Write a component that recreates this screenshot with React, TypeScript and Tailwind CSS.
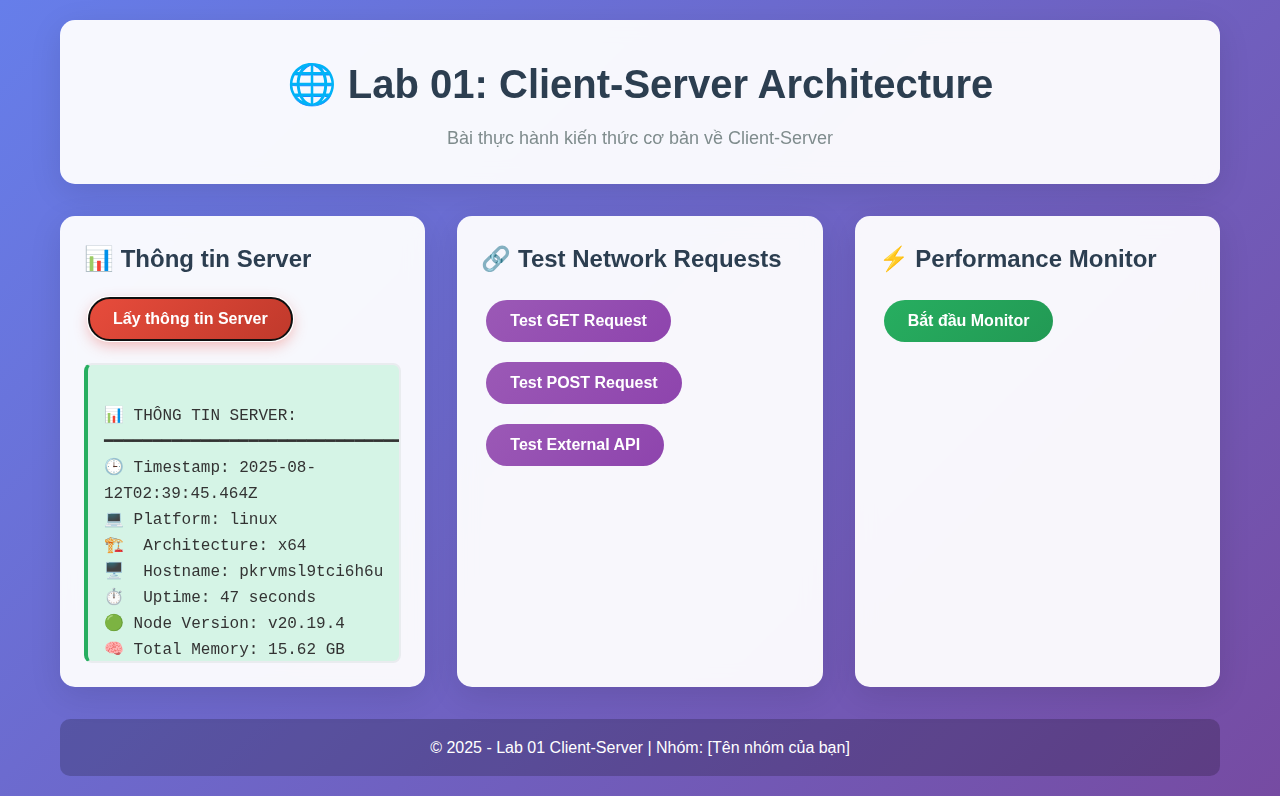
import type { ReactNode } from 'react';

const serverInfo = [
  '📊 THÔNG TIN SERVER:',
  '━'.repeat(40),
  '🕒 Timestamp: 2025-08-12T02:39:45.464Z',
  '💻 Platform: linux',
  '🏗️  Architecture: x64',
  '🖥️  Hostname: pkrvmsl9tci6h6u',
  '⏱️  Uptime: 47 seconds',
  '🟢 Node Version: v20.19.4',
  '🧠 Total Memory: 15.62 GB',
].join('\n');

const tones = {
  danger:
    'bg-[linear-gradient(135deg,#e74c3c,#c0392b)] -translate-y-0.5 shadow-[0_5px_15px_rgba(231,76,60,0.4)] [outline:auto_1px_-webkit-focus-ring-color]',
  purple: 'bg-[linear-gradient(135deg,#9b59b6,#8e44ad)]',
  green: 'bg-[linear-gradient(135deg,#27ae60,#229954)]',
};

function PillButton({ tone, children }: { tone: keyof typeof tones; children: ReactNode }) {
  return (
    <button
      type="button"
      className={`cursor-pointer rounded-[25px] px-6 py-3 text-base leading-[18px] font-semibold text-white ${tones[tone]}`}
    >
      {children}
    </button>
  );
}

function Card({ title, actions, children }: { title: string; actions: ReactNode; children?: ReactNode }) {
  return (
    <section className="min-w-0 rounded-[15px] bg-white/95 p-6 shadow-[0_8px_32px_rgba(0,0,0,0.1)] backdrop-blur-[10px]">
      <h2 className="mb-4 text-2xl leading-[38px] font-bold text-[#2c3e50]">{title}</h2>
      <div className="flex flex-col items-start gap-5 px-[5px] py-1.5">{actions}</div>
      {children}
    </section>
  );
}

export default function App() {
  return (
    <div className="min-h-screen bg-[linear-gradient(135deg,#667eea_0%,#764ba2_100%)] font-['Liberation_Sans',Arial,sans-serif] text-[#333]">
      <div className="mx-auto flex max-w-[1200px] flex-col gap-8 p-5">
        <header className="rounded-[15px] bg-white/95 p-8 text-center shadow-[0_8px_32px_rgba(0,0,0,0.1)] backdrop-blur-[10px]">
          <h1 className="mb-2 text-[40px] leading-[64px] font-bold text-[#2c3e50]">
            🌐 Lab 01: Client-Server Architecture
          </h1>
          <p className="text-lg leading-7 text-[#7f8c8d]">Bài thực hành kiến thức cơ bản về Client-Server</p>
        </header>

        <main className="grid grid-cols-1 gap-8 md:grid-cols-3">
          <Card title="📊 Thông tin Server" actions={<PillButton tone="danger">Lấy thông tin Server</PillButton>}>
            <pre className="mt-[15px] max-h-[300px] overflow-hidden rounded-lg border-2 border-l-4 border-[#e9ecef] border-l-[#27ae60] bg-[#d5f4e6] px-4 pt-[38px] pb-4 font-['Liberation_Mono','Courier_New',monospace] text-base leading-[26px] whitespace-pre-wrap">
              {serverInfo}
            </pre>
          </Card>
          <Card
            title="🔗 Test Network Requests"
            actions={
              <>
                <PillButton tone="purple">Test GET Request</PillButton>
                <PillButton tone="purple">Test POST Request</PillButton>
                <PillButton tone="purple">Test External API</PillButton>
              </>
            }
          />
          <Card title="⚡ Performance Monitor" actions={<PillButton tone="green">Bắt đầu Monitor</PillButton>} />
        </main>

        <footer className="rounded-[10px] bg-black/20 p-4 text-center leading-[25px] text-white">
          <p>© 2025 - Lab 01 Client-Server | Nhóm: [Tên nhóm của bạn]</p>
        </footer>
      </div>
    </div>
  );
}
